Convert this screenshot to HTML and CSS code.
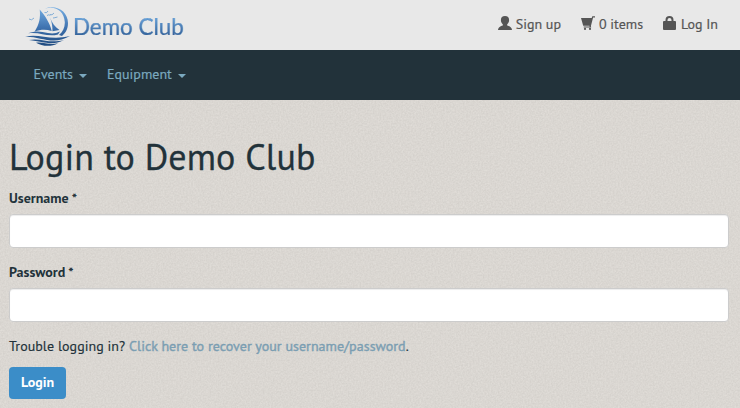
FILE: index.html
```html
<!DOCTYPE html>
<html lang="en">
<head>
<meta charset="utf-8">
<title>Login to Demo Club</title>
<link rel="stylesheet" href="styles.css">
</head>
<body>
<svg class="texture" aria-hidden="true">
  <filter id="grain" x="0" y="0" width="100%" height="100%" color-interpolation-filters="sRGB">
    <feTurbulence type="fractalNoise" baseFrequency="0.6" numOctaves="2" seed="4"/>
    <feColorMatrix values="0.075 0 0 0 0.818  0.075 0 0 0 0.804  0.075 0 0 0 0.785  0 0 0 0 1"/>
  </filter>
  <rect width="100%" height="100%" filter="url(#grain)"/>
</svg>
<header class="topbar">
  <a class="brand">
    <svg class="brand-mark" width="46" height="40" viewBox="0 0 46 40">
      <defs><linearGradient id="sea" gradientUnits="userSpaceOnUse" x1="20" y1="0" x2="20" y2="39"><stop stop-color="#79b2e6"/><stop offset=".55" stop-color="#3f73b0"/><stop offset="1" stop-color="#1f4b80"/></linearGradient></defs>
      <g fill="url(#sea)">
        <path d="M20 2.500C31-2 43 5 43 17c0 6-2.500 10-6 13l-3-1c4-3.500 6-8 5.800-13C39 5 31-.5 20 2.500Z"/>
        <path d="M14.700 3.500c5 5.500 10 13 12 21.500-6-1.800-11-1.500-17 .5 4.500-7 6-14 5-22Z"/>
        <path d="M25 11.500c2 5.500 5 9.500 9.500 12.500l-7 1.200C27.500 20 26.800 16 25 11.500Z"/>
        <path d="M3 27.300c9-3 13-1.500 20-.3 5 .9 8 .3 12-1.500l-2 3C22 31.500 15 25.500 3 27.300Z"/>
        <path d="M0 30.700c14-3.800 24 4.300 45-.7-17 10-30 0-45 .7Z"/>
        <path d="M4 34c12-2.500 20 4 35 0-12 6.500-20 1.500-35 0Z"/>
        <path d="M11 36.700c8-1 13 2.800 22 .5-7 4-16 3-22-.5Z"/>
      </g>
      <path d="m4 13 2.500.8L9 12M19.500 6.500l2 .2L23 5M22 9.500l1.800-.7 1.500.6M25 8.500l2 .3L29 7M28 12l1.800-.3L32.500 11" fill="none" stroke="#6a9fd2" stroke-width=".8"/>
    </svg>
    <span class="brand-name">Demo Club</span>
  </a>
  <nav class="account">
    <a><svg width="14" height="14" viewBox="0 0 14 14"><path d="M7 0c2.700 0 4.100 1.600 4.100 4 0 2-.9 3.500-1.900 4.300v1.200c2.300.8 4.500 1.500 4.800 4.500H0c.3-3 2.500-3.700 4.800-4.500V8.300C3.800 7.500 2.900 6 2.900 4 2.900 1.600 4.300 0 7 0Z"/></svg>Sign up</a>
    <a><svg width="14" height="14" viewBox="0 0 14 14"><path d="M0 2h10.700L11.300.2H14v1.200h-1.900L9.900 10l.3 1.600H2.700v-1h5.900L8.400 9.700H2.200Z"/><circle cx="4" cy="12.900" r="1.100"/><circle cx="9" cy="12.900" r="1.100"/></svg>0 items</a>
    <a><svg width="14" height="14" viewBox="0 0 14 14"><path d="M2.500 5V4a4 4 0 0 1 8 0v1H12q1 0 1 1v7q0 1-1 1H1q-1 0-1-1V6q0-1 1-1Zm2 0h4V4a2 2 0 0 0-4 0Z"/></svg>Log In</a>
  </nav>
</header>
<nav class="menu">
  <a>Events<i class="caret"></i></a>
  <a>Equipment<i class="caret"></i></a>
</nav>
<main>
  <h1>Login to Demo Club</h1>
  <form>
    <label for="user">Username *</label>
    <input id="user" type="text">
    <label for="pass">Password *</label>
    <input id="pass" type="password">
    <p>Trouble logging in? <a class="recover">Click here to recover your username/password</a>.</p>
    <button type="button">Login</button>
  </form>
</main>
</body>
</html>
```
FILE: styles.css
```css
* { box-sizing: border-box; }
body {
  margin: 0;
  height: 408px;
  overflow: hidden;
  background: #dad6d1;
  color: #22323a;
  font: 14px/20px "PT Sans", "Noto Sans", sans-serif;
}
.texture { position: absolute; inset: 0; width: 100%; height: 100%; z-index: -1; }
.topbar {
  display: flex;
  justify-content: space-between;
  height: 50px;
  padding: 0 22px 0 25px;
  background: #e8e8e8;
}
.brand { display: flex; padding-top: 6px; }
.brand-name {
  margin-left: 2px;
  font: 22.4px/42px Lato, sans-serif;
  color: transparent;
  background: linear-gradient(#6aa5dc 25%, #29558c 75%);
  background-clip: text;
  -webkit-background-clip: text;
  -webkit-text-stroke: .2px #4478b3;
}
.account { display: flex; gap: 20px; color: #555; padding-top: 14px; }
.account a { display: flex; gap: 4px; white-space: nowrap; -webkit-text-stroke: .2px; }
.account svg { margin-top: 2px; fill: #555; flex: none; }
.menu {
  display: flex;
  gap: 20px;
  height: 50px;
  padding: 14px 33.5px;
  background: #22323a;
  color: #7ba9bf;
  -webkit-text-stroke: .2px;
}
.menu a { display: flex; }
.caret {
  margin: 10px 0 0 6px;
  width: 0;
  height: 0;
  border: 4px solid transparent;
  border-top-color: #7ba9bf;
  border-bottom: 0;
}
main { padding: 37px 11px 0 9px; }
h1 { margin: 0 0 11px; font-size: 36px; line-height: 40px; font-weight: 400; letter-spacing: .1px; white-space: nowrap; -webkit-text-stroke: .3px; }
label { display: block; width: max-content; margin-bottom: 6px; font-weight: 700; }
input {
  display: block;
  width: 100%;
  height: 34px;
  margin: 0 0 14px;
  padding: 6px 12px;
  border: 1px solid #ccc;
  border-radius: 4px;
  background: #fff;
  box-shadow: inset 0 1px 1px rgba(0, 0, 0, .075);
}
p { margin: 0 0 11px; white-space: pre; letter-spacing: .04px; -webkit-text-stroke: .15px; }
.recover { color: #7b9eb2; -webkit-text-stroke: .4px; }
button {
  display: block;
  width: 57px;
  height: 32px;
  padding: 0 0 2px;
  border: 0;
  border-radius: 4px;
  background: #3b8dc8;
  color: #fff;
  font: 700 14px/30px "PT Sans", "Noto Sans", sans-serif;
}
```
